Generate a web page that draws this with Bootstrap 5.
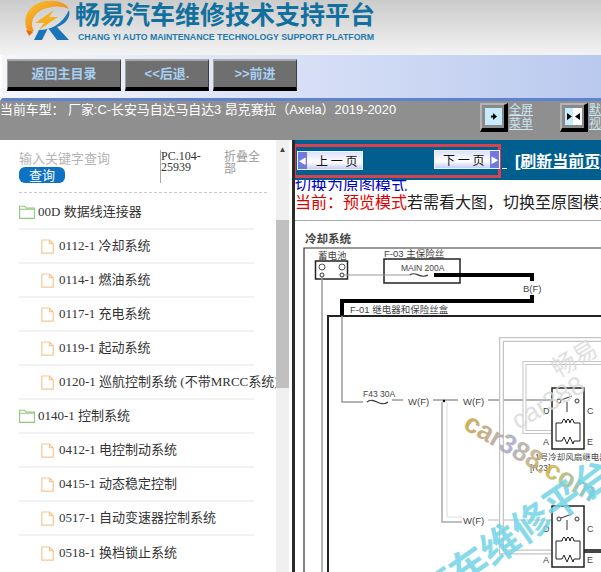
<!DOCTYPE html>
<html lang="zh-CN">
<head>
    <meta charset="UTF-8">
    <meta name="viewport" content="width=device-width, initial-scale=1.0">
    <title>畅易汽车维修技术支持平台</title>

    <!-- Bootstrap CSS -->
    <link href="https://cdn.jsdelivr.net/npm/bootstrap@5.3.0/dist/css/bootstrap.min.css" rel="stylesheet">

    <style>
        html, body {
            height: 572px;
            overflow: hidden;
        }

        body {
            font-family: "Liberation Sans", "Noto Sans CJK SC", sans-serif;
            background: white;
        }

        /* Header */
        .top-header {
            height: 55px;
            background: linear-gradient(#cbcbcb, #f3f3f3);
            padding-left: 24px;
        }

        .logo-title {
            font-size: 25px;
            line-height: 26px;
            font-weight: bold;
            color: #12709f;
            margin: 2px 0 0 3px;
        }

        .logo-sub {
            font-size: 8.77px;
            line-height: 11px;
            font-weight: bold;
            color: #1d78ad;
            margin: 4px 0 0 6px;
            white-space: nowrap;
        }

        /* Toolbar */
        .tool-bar {
            height: 46px;
            background: linear-gradient(to right, #f5f6fd, #b9c9ee);
            border-left: 2px solid white;
            border-bottom: 3px solid #5e82d2;
            padding: 4px 0 0 5px;
        }

        .tool-btn {
            height: 32px;
            background: #6f6f6f;
            border-style: solid;
            border-width: 2px 1px 4px 1px;
            border-color: #a8a8a8 #3c3c3c #000 #a0a0a0;
            border-radius: 0;
            color: #a7cff2;
            font-size: 13px;
            font-weight: bold;
            padding: 0;
        }

        .w-back { width: 114px; }
        .w-nav { width: 84px; }

        /* Model bar */
        .model-bar {
            height: 39px;
            background: #8f8f8f;
            color: white;
            overflow: hidden;
        }

        .model-text {
            width: 480px;
            font-size: 12.9px;
            line-height: 17px;
            white-space: nowrap;
        }

        .view-btn {
            width: 28px;
            height: 29px;
            margin-top: 2px;
            background: #8a8a8a;
            border-style: solid;
            border-width: 2px 4px 4px 2px;
            border-color: #b4b4b4 #000 #000 #b4b4b4;
        }

        .view-link {
            font-size: 12px;
            line-height: 14px;
            color: #c9e6ef;
            width: 24px;
            margin: 2px 27px 0 1px;
            flex-shrink: 0;
        }

        /* Left tree */
        .side-panel {
            width: 295px;
            height: 432px;
            flex-shrink: 0;
        }

        .tree-area {
            width: 276px;
            padding-left: 19px;
            overflow: hidden;
            flex-shrink: 0;
        }

        .search-row {
            height: 53px;
            width: 248px;
            padding-top: 11px;
            border-bottom: 1px dashed #c9c9c9;
        }

        .search-box {
            width: 141px;
        }

        .search-hint {
            font-size: 13px;
            line-height: 16px;
            color: #b4b4b4;
        }

        .search-btn {
            display: block;
            width: 46px;
            height: 16px;
            padding: 0;
            font-size: 13px;
            line-height: 15px;
            color: white;
            background: #0b72c4;
            border: 0;
            border-radius: 6px;
        }

        .pc-code {
            width: 64px;
            height: 33px;
            font-family: "Liberation Serif", serif;
            font-size: 12px;
            line-height: 11px;
            color: #333;
            border-left: 1px solid #a9a9a9;
            padding-top: 1px;
            margin-top: -1px;
        }

        .fold-all {
            width: 40px;
            font-size: 12px;
            line-height: 12px;
            color: #999;
        }

        .tree-list {
            width: 235px;
            margin-top: 3px;
        }

        .tree-list .list-group-item {
            height: 34px;
            padding: 0;
            display: flex;
            align-items: center;
            font-family: "Liberation Serif", "Noto Sans CJK SC", serif;
            font-size: 13px;
            color: #333;
            white-space: nowrap;
            border-color: #f1f1f1;
            border-width: 0 0 2px;
            background: transparent;
        }

        .tree-list .leaf {
            padding-left: 22px;
        }

        .tree-list svg {
            flex-shrink: 0;
            margin-right: 3px;
        }

        .tree-list .leaf svg {
            margin-right: 5px;
        }

        /* Scrollbar */
        .side-scroll {
            width: 13px;
            background: #f0f0f0;
        }

        .scroll-up {
            height: 20px;
            font-size: 8px;
            line-height: 20px;
            text-align: center;
            color: #444;
        }

        .scroll-thumb {
            height: 168px;
            margin-top: 60px;
            background: #c0c0c0;
        }

        .split-line {
            width: 3px;
            margin-left: 3px;
            background: #2a2a2a;
        }

        /* Right content */
        .content-panel {
            width: 306px;
            flex-shrink: 0;
            overflow: hidden;
        }

        .page-bar {
            height: 40px;
            background: #005f8f;
            padding-top: 4px;
        }

        .red-frame {
            width: 208px;
            height: 34px;
            margin-left: -2px;
            border: 3px solid #d8414d;
            padding: 4px 0 0 1px;
            gap: 71px;
            flex-shrink: 0;
        }

        .page-btn {
            width: 66px;
            height: 19px;
            padding: 0;
            flex-shrink: 0;
            font-family: "Noto Sans CJK SC", sans-serif;
            font-size: 12px;
            line-height: 17px;
            color: #111;
            background: linear-gradient(#dfe2fa, #ffffff 60%, #c8ccf0);
            border: 1px solid #eef2ff;
            border-radius: 0;
        }

        .page-btn:last-child {
            margin-top: -1px;
        }

        .page-btn i {
            display: inline-block;
            width: 9px;
            height: 100%;
            background: #7378e0;
            color: white;
            font-style: normal;
            font-size: 8px;
        }

        .prev-label {
            margin-left: 9px;
        }

        .next-label {
            margin-left: 8px;
        }

        .gap-link {
            width: 5px;
            margin: 24px 0 0 1px;
            height: 1px;
            background: white;
            flex-shrink: 0;
        }

        .refresh-link {
            font-size: 16px;
            font-weight: bold;
            color: white;
            white-space: nowrap;
            margin-left: 8px;
        }

        .mode-link {
            display: block;
            height: 11px;
            overflow: hidden;
            font-size: 16px;
            line-height: 11px;
            color: #0000cc;
            text-decoration: underline;
            white-space: nowrap;
        }

        .mode-note {
            height: 30px;
            font-size: 16px;
            line-height: 24px;
            white-space: nowrap;
            border-bottom: 1px solid #a8a8a8;
            color: #222;
        }

        .mode-note span {
            color: #e00000;
        }

        .wiring {
            display: block;
            width: 306px;
            height: 351px;
        }

        .wiring text {
            font-family: "Liberation Sans", "Noto Sans CJK SC", sans-serif;
            fill: #444;
        }
    </style>
</head>
<body>

    <!-- Header -->
    <div class="top-header d-flex">
        <svg width="48" height="43" viewBox="0 0 48 43">
            <defs>
                <linearGradient id="ring" x1="0" y1="0" x2="1" y2="1">
                    <stop offset="0" stop-color="#f9c72f"/>
                    <stop offset="1" stop-color="#e8690f"/>
                </linearGradient>
            </defs>
            <path d="M5 33C-3 22 2 7 17 2 29-1 41 1 45 9 37 5 24 6 16 11 8 16 6 25 10 31Z" fill="url(#ring)"/>
            <path d="M30 10 11 23 20 23 15 30 34 17 25 17Z" fill="#f6ae22"/>
            <path d="M2 30 9 32 5 36Z" fill="#e8690f"/>
            <path d="M45 10C47 17 42 24 33 27L45 40 33 40 24 28 18 40 10 40 15 30C26 30 38 25 45 10Z" fill="#1b76b8"/>
        </svg>
        <div>
            <div class="logo-title">畅易汽车维修技术支持平台</div>
            <div class="logo-sub">CHANG YI AUTO MAINTENANCE TECHNOLOGY SUPPORT PLATFORM</div>
        </div>
    </div>

    <!-- Toolbar -->
    <div class="tool-bar d-flex gap-1">
        <button class="btn tool-btn w-back">返回主目录</button>
        <button class="btn tool-btn w-nav">&lt;&lt;后退.</button>
        <button class="btn tool-btn w-nav">&gt;&gt;前进</button>
    </div>

    <!-- Model bar -->
    <div class="model-bar d-flex">
        <div class="model-text flex-shrink-0">当前车型： 厂家:C-长安马自达马自达3 昂克赛拉（Axela）2019-2020</div>
        <div class="view-btn flex-shrink-0">
            <svg class="d-block" width="22" height="23" viewBox="0 0 22 23">
                <rect x="3" y="3" width="17" height="17" fill="#c6ecfb"/>
                <path d="M11 8 15 11.500 11 15Z" fill="#000"/>
                <rect x="9" y="10.500" width="2" height="2" fill="#000"/>
            </svg>
        </div>
        <a class="view-link" href="#">全屏菜单</a>
        <div class="view-btn flex-shrink-0">
            <svg class="d-block" width="22" height="23" viewBox="0 0 22 23">
                <rect x="3" y="3" width="17" height="17" fill="#fff"/>
                <rect x="3" y="3" width="8" height="17" fill="#c6ecfb"/>
                <path d="M5 8 10 11.500 5 15ZM18 8 13 11.500 18 15Z" fill="#000"/>
            </svg>
        </div>
        <a class="view-link" href="#">默认视图</a>
    </div>

    <div class="d-flex">
        <!-- Left tree -->
        <div class="side-panel d-flex">
            <div class="tree-area">
                <div class="search-row d-flex">
                    <div class="search-box">
                        <div class="search-hint">输入关键字查询</div>
                        <button class="btn search-btn">查询</button>
                    </div>
                    <div class="pc-code">PC.104-25939</div>
                    <div class="fold-all">折叠全部</div>
                </div>

                <ul class="list-group list-group-flush tree-list" id="tree"></ul>
            </div>
            <div class="side-scroll flex-shrink-0">
                <div class="scroll-up">&#9650;</div>
                <div class="scroll-thumb"></div>
            </div>
            <div class="split-line flex-shrink-0"></div>
        </div>

        <!-- Right content -->
        <div class="content-panel">
            <div class="page-bar d-flex">
                <div class="red-frame d-flex">
                    <button class="btn page-btn d-flex"><i>&#9664;</i><span class="prev-label">上 一 页</span></button>
                    <button class="btn page-btn d-flex"><span class="next-label">下 一 页</span><i class="ms-auto">&#9654;</i></button>
                </div>
                <div class="gap-link"></div>
                <a class="refresh-link align-self-center" href="#">[刷新当前页]</a>
            </div>
            <a class="mode-link" href="#">切换为原图模式</a>
            <div class="mode-note"><span>当前：预览模式</span>若需看大图，切换至原图模式</div>

            <svg class="wiring" viewBox="295 221 306 351" xmlns="http://www.w3.org/2000/svg">
                <defs>
                    <linearGradient id="carMark" x1="0" y1="0" x2="1" y2="0">
                        <stop offset="0" stop-color="#c9a23c"/>
                        <stop offset="0.35" stop-color="#a8a8c8"/>
                        <stop offset="0.65" stop-color="#d2b24a"/>
                        <stop offset="1" stop-color="#6fc0d8"/>
                    </linearGradient>
                </defs>

                <text x="305" y="243" font-size="11.500" font-weight="bold">冷却系统</text>
                <path d="M304 572V248H601" fill="none" stroke="#333" stroke-width="1.200"/>
                <text x="318" y="259" font-size="9.500">蓄电池</text>
                <text x="384" y="257" font-size="9.500">F-03 主保险丝</text>
                <rect x="315.500" y="261" width="32" height="18" fill="none" stroke="#222" stroke-width="1.500"/>
                <circle cx="322" cy="267" r="3" fill="none" stroke="#555"/>
                <circle cx="342" cy="267" r="3" fill="none" stroke="#555"/>
                <circle cx="322" cy="275" r="2" fill="none" stroke="#333"/>
                <circle cx="342" cy="275" r="2" fill="none" stroke="#333"/>
                <rect x="384" y="259" width="76" height="24" fill="none" stroke="#222" stroke-width="1.500"/>
                <text x="401" y="271" font-size="8.500">MAIN 200A</text>
                <path d="M344 275H410" stroke="#999" fill="none"/>
                <path d="M410 275C416 270 420 280 428 275" stroke="#333" fill="none" stroke-width="1.200"/>
                <path d="M434 275H532V281M532 295V301H342V316" fill="none" stroke="#000" stroke-width="4"/>
                <text x="523" y="292" font-size="9.500">B(F)</text>
                <path d="M322 277V572" stroke="#999" fill="none" stroke-width="1.500"/>

                <text x="350" y="313" font-size="9.500">F-01 继电器和保险丝盒</text>
                <path d="M601 316H328V572" fill="none" stroke="#222" stroke-width="2"/>
                <path d="M342 316V402H363" fill="none" stroke="#999" stroke-width="1.500"/>

                <text x="363" y="397" font-size="8.500">F43 30A</text>
                <path d="M367 402C374 396 380 408 388 402" stroke="#333" fill="none" stroke-width="1.200"/>
                <path d="M392 400H403M433 400H458M488 400H552" stroke="#666" fill="none"/>
                <text x="408" y="405" font-size="9.500">W(F)</text>
                <text x="463" y="405" font-size="9.500">W(F)</text>
                <circle cx="444" cy="401" r="1.200" fill="#000"/>
                <path d="M442 402V522H462" stroke="#aaa" fill="none" stroke-width="1.500"/>
                <path d="M447 402V517H462" stroke="#ddd" fill="none"/>
                <text x="463" y="524" font-size="9.500">W(F)</text>
                <path d="M488 520H552" stroke="#bbb" fill="none"/>

                <path d="M601 339.500H501.500V552H552" fill="none" stroke="#c4c4c4" stroke-width="5"/>
                <path d="M601 339.500H501.500V552H552" fill="none" stroke="#fff" stroke-width="2.500"/>
                <path d="M601 363H524.500V432H552" fill="none" stroke="#c4c4c4" stroke-width="4"/>
                <path d="M601 363H524.500V432H552" fill="none" stroke="#fff" stroke-width="2"/>
                <path d="M584 551H601" stroke="#444" stroke-width="4"/>

                <g id="relay1">
                    <rect x="552" y="388" width="32" height="61" fill="#fff" stroke="#222" stroke-width="1.500"/>
                    <path d="M561 400 572 396M567 402V412" stroke="#333" fill="none"/>
                    <circle cx="559" cy="401" r="2" fill="none" stroke="#333"/>
                    <circle cx="577" cy="401" r="2" fill="none" stroke="#333"/>
                    <path d="M556 432V423H562M574 423H580V432M556 432V441H562M574 441H580V432" stroke="#222" fill="none"/>
                    <path d="M562 423Q564 415 566 423Q568 415 570 423Q572 415 574 423" stroke="#222" fill="none"/>
                    <path d="M562 441 564 437 567 444 570 437 573 444 574 441" stroke="#222" fill="none"/>
                    <text x="543" y="414" font-size="9">D</text>
                    <text x="587" y="414" font-size="9">C</text>
                    <text x="543" y="445" font-size="9">A</text>
                    <text x="587" y="445" font-size="9">E</text>
                </g>
                <use href="#relay1" y="118"/>
                <text x="535" y="460" font-size="8.500">1号冷却风扇继电器</text>
                <text x="530" y="471" font-size="8.500">[R23]</text>

                <!-- watermarks -->
                <text transform="translate(558 378) rotate(-30)" font-size="24" opacity="0.8" style="fill:#d8d8d8">畅易</text>
                <text transform="translate(518 430) rotate(-30)" font-size="26" opacity="0.8" style="fill:#d8d8d8">car388</text>
                <text transform="translate(462 428) rotate(30)" font-size="27" font-weight="bold" opacity="0.85" style="fill:url(#carMark)">car388.com</text>
                <text transform="translate(430 610) rotate(-35)" font-size="38" font-weight="bold" opacity="0.85" style="fill:#73d4e6">汽车维修平台</text>
            </svg>
        </div>
    </div>

    <!-- Bootstrap JS -->
    <script src="https://cdn.jsdelivr.net/npm/bootstrap@5.3.0/dist/js/bootstrap.bundle.min.js"></script>

    <!-- Fill the tree -->
    <script>
        const folderIcon = '<svg width="16" height="14" viewBox="0 0 16 14" fill="none" stroke="#8cc97e" stroke-width="1.1"><path d="M.6 13.400V1.200H5.600L7 3H15.400V13.400ZM.6 4.200H15.400"/></svg>';
        const fileIcon = '<svg width="13" height="15" viewBox="0 0 13 15" fill="none" stroke="#f3c795" stroke-width="1.2"><path d="M.8 1H8.500L12.200 4.700V14.200H.8ZM8.500 1V4.700H12.200"/></svg>';

        const treeItems = [
            ["f", "00D 数据线连接器"],
            ["d", "0112-1 冷却系统"],
            ["d", "0114-1 燃油系统"],
            ["d", "0117-1 充电系统"],
            ["d", "0119-1 起动系统"],
            ["d", "0120-1 巡航控制系统 (不带MRCC系统)"],
            ["f", "0140-1 控制系统"],
            ["d", "0412-1 电控制动系统"],
            ["d", "0415-1 动态稳定控制"],
            ["d", "0517-1 自动变速器控制系统"],
            ["d", "0518-1 换档锁止系统"]
        ];

        document.getElementById("tree").innerHTML = treeItems.map(function(item) {
            const isFolder = item[0] === "f";
            return '<li class="list-group-item' + (isFolder ? '' : ' leaf') + '">' + (isFolder ? folderIcon : fileIcon) + item[1] + '</li>';
        }).join("");
    </script>

</body>
</html>
